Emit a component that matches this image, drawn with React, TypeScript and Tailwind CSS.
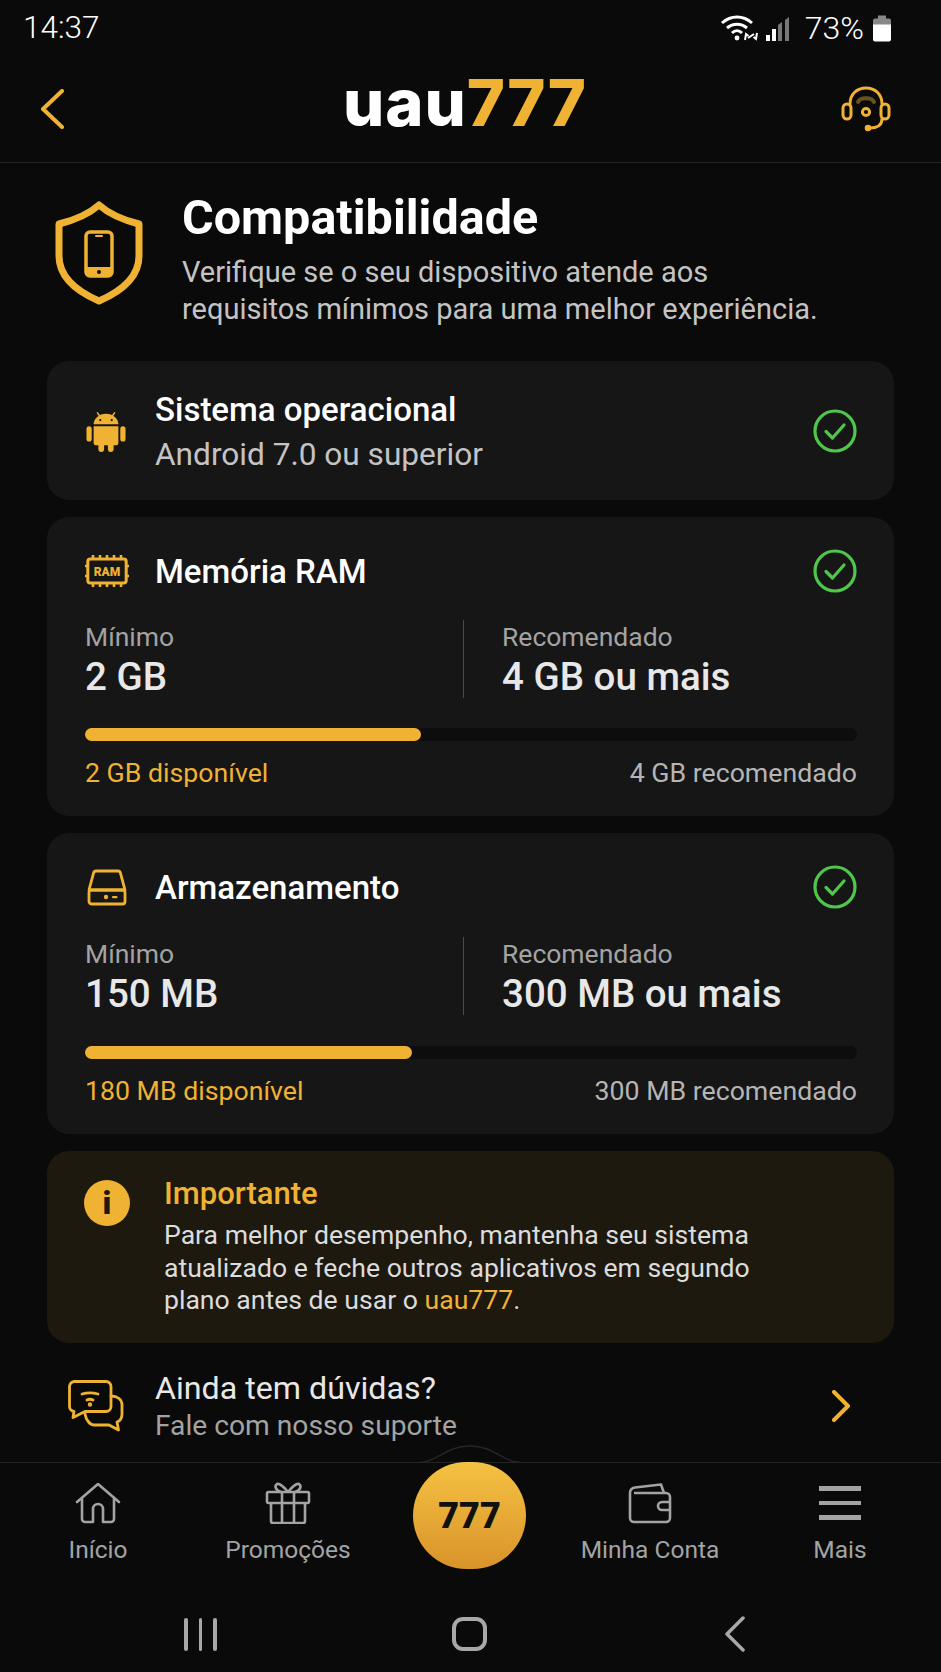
import React from "react";

const GOLD = "#f0b232";

function CheckBadge() {
  return (
    <svg width="44" height="44" viewBox="0 0 44 44" fill="none" className="shrink-0">
      <circle cx="22" cy="22" r="20" stroke="#4fc74a" strokeWidth="3.2" />
      <path d="M13 22.5l6.5 6.5L31 16" stroke="#4fc74a" strokeWidth="3.2" strokeLinecap="round" strokeLinejoin="round" />
    </svg>
  );
}

function ShieldIcon() {
  return (
    <svg width="88" height="104" viewBox="0 0 88 104" fill="none">
      <path d="M44 4C35 12 24 18 4 23v32c0 20 17 35 40 45 23-10 40-25 40-45V23C64 18 53 12 44 4z" stroke={GOLD} strokeWidth="7" strokeLinejoin="round" />
      <rect x="31" y="31" width="26" height="44" rx="4" stroke={GOLD} strokeWidth="3.5" />
      <path d="M31 66h26v6a4 4 0 0 1-4 4H35a4 4 0 0 1-4-4z" fill={GOLD} />
      <rect x="40" y="34" width="8" height="2" rx="1" fill={GOLD} />
      <circle cx="44" cy="71" r="2" fill="#0a0a0a" />
    </svg>
  );
}

function AndroidIcon() {
  return (
    <svg width="40" height="42" viewBox="0 0 42 44" fill={GOLD} className="ml-[1px]">
      <path d="M12 3l3 4M30 3l-3 4" stroke={GOLD} strokeWidth="1.6" strokeLinecap="round" />
      <path d="M8 15a13 11 0 0 1 26 0z" />
      <circle cx="15" cy="10.5" r="1.2" fill="#161616" />
      <circle cx="27" cy="10.5" r="1.2" fill="#161616" />
      <path d="M8 17h26v17a3 3 0 0 1-3 3H11a3 3 0 0 1-3-3z" />
      <rect x="0.5" y="17" width="5.5" height="16" rx="2.7" />
      <rect x="36" y="17" width="5.5" height="16" rx="2.7" />
      <rect x="13" y="33" width="6" height="11" rx="3" />
      <rect x="23" y="33" width="6" height="11" rx="3" />
    </svg>
  );
}

function RamIcon() {
  return (
    <svg width="44" height="32" viewBox="0 0 44 32" fill="none">
      <rect x="2.8" y="4" width="38.4" height="24" rx="2.5" stroke={GOLD} strokeWidth="3" />
      <path d="M8 0v3M15 0v3M22 0v3M29 0v3M36 0v3M8 29v3M15 29v3M22 29v3M29 29v3M36 29v3M0 11h2M0 21h2M42 11h2M42 21h2" stroke={GOLD} strokeWidth="2.6" />
      <text x="22" y="20.5" textAnchor="middle" fontSize="12" fontWeight="900" fill={GOLD} fontFamily="Roboto, sans-serif">RAM</text>
    </svg>
  );
}

function DriveIcon() {
  return (
    <svg width="40" height="37" viewBox="0 0 40 37" fill="none" className="ml-[2px]">
      <path d="M9 2h22a2.5 2.5 0 0 1 2.4 1.9L38 21H2L6.6 3.9A2.5 2.5 0 0 1 9 2z" stroke={GOLD} strokeWidth="2.8" strokeLinejoin="round" />
      <rect x="2" y="21" width="36" height="14" rx="2.5" stroke={GOLD} strokeWidth="2.8" />
      <circle cx="19" cy="28" r="2.2" fill={GOLD} />
      <rect x="25" y="27" width="5.5" height="2.2" rx="1" fill={GOLD} />
    </svg>
  );
}

function HeadsetIcon() {
  return (
    <svg width="50" height="46" viewBox="0 0 50 46" fill="none" stroke={GOLD} strokeWidth="3" strokeLinecap="round">
      <path d="M9 18C9 8 16 2 25 2s16 6 16 16" />
      <rect x="2" y="18" width="8" height="15" rx="4" />
      <rect x="40" y="18" width="8" height="15" rx="4" />
      <circle cx="25" cy="26" r="3.6" />
      <path d="M41 33c0 6-5 9-12 9" />
      <circle cx="27" cy="42" r="1.8" fill={GOLD} />
      <path d="M17 16c2-5 14-5 16 0" stroke="#6a5220" strokeWidth="4" />
    </svg>
  );
}

function ChatIcon() {
  return (
    <svg width="56" height="52" viewBox="0 0 56 52" fill="none" stroke={GOLD} strokeWidth="2.8" strokeLinejoin="round" strokeLinecap="round">
      <path d="M7 1.5h31a5 5 0 0 1 5 5v20a5 5 0 0 1-5 5H17l-12 6 1-6.2a5 5 0 0 1-4.500-4.800v-20a5 5 0 0 1 5-5z" />
      <path d="M43 16c6 0 11 3 11 9v9c0 4-2 7-5 8l1.500 8-9.500-5H26c-4 0-8-5-9-11" />
      <path d="M14 14c5-1.500 11-1.500 16 0M19 20c2-1 4-1 6 0" />
      <circle cx="22" cy="24.500" r="0.8" fill={GOLD} />
    </svg>
  );
}

function HomeIcon() {
  return (
    <svg width="46" height="42" viewBox="0 0 46 42" fill="none" stroke="#a3a3a3" strokeWidth="2.6" strokeLinejoin="round" strokeLinecap="round">
      <path d="M2 20L23 2l21 18" />
      <path d="M7 17v20a3 3 0 0 0 3 3h8V27a5 5 0 0 1 10 0v13h8a3 3 0 0 0 3-3V17" />
    </svg>
  );
}

function GiftIcon() {
  return (
    <svg width="46" height="42" viewBox="0 0 46 42" fill="none" stroke="#a3a3a3" strokeWidth="2.6" strokeLinejoin="round">
      <rect x="2" y="10" width="42" height="11" rx="1.5" />
      <path d="M6 21v18a2 2 0 0 0 2 2h30a2 2 0 0 0 2-2V21M17 10v31M29 10v31" />
      <path d="M23 10C19 5 15 1 12 2c-3 2-1 7 4 8M23 10c4-5 8-9 11-8 3 2 1 7-4 8" />
    </svg>
  );
}

function WalletIcon() {
  return (
    <svg width="44" height="41" viewBox="0 0 44 41" fill="none" stroke="#a3a3a3" strokeWidth="2.6" strokeLinejoin="round">
      <path d="M2 10c0-3 2-5 5-5.500L33 1.500 36 10" />
      <path d="M2 10v25a4 4 0 0 0 4 4h32a4 4 0 0 0 4-4V14a4 4 0 0 0-4-4H6" />
      <path d="M42 19h-8a4 4 0 0 0 0 8h8" />
    </svg>
  );
}

function MenuIcon() {
  return (
    <div className="flex h-[42px] w-[42px] flex-col justify-center gap-[10px]">
      <div className="h-[4.500px] bg-[#a3a3a3]" />
      <div className="h-[4.500px] bg-[#a3a3a3]" />
      <div className="h-[4.500px] bg-[#a3a3a3]" />
    </div>
  );
}

function StatusIcons() {
  return (
    <svg width="73" height="27" viewBox="0 0 73 27" fill="none">
      <path d="M1 8c9-8 21-8 30 0M6 13c6-5 14-5 20 0M11 18c3-3 7-3 10 0" stroke="#fff" strokeWidth="3" />
      <circle cx="16" cy="23" r="2.400" fill="#fff" />
      <path d="M24 25l1-6 2.500 2M36 18l-1 6-2.500-2" stroke="#fff" strokeWidth="2" />
      <path d="M27 23l6-4" stroke="#fff" strokeWidth="2" />
      <rect x="45" y="20" width="4" height="6" fill="#fff" />
      <rect x="51" y="14" width="4" height="12" fill="#fff" />
      <path d="M57 10l4-3v19h-4z" fill="#777" />
      <path d="M64 5l4-3v24h-4z" fill="#777" />
    </svg>
  );
}

type SpecProps = {
  icon: React.ReactNode;
  title: string;
  min: string;
  rec: string;
  fill: string;
  available: string;
  recommended: string;
  tall?: boolean;
};

function SpecCard({ icon, title, min, rec, fill, available, recommended, tall }: SpecProps) {
  return (
    <section className="flex flex-col rounded-[22px] bg-[#161616] pb-[28px] pl-[38px] pr-[37px] pt-[32px]">
      <div className="flex h-[44px] items-center">
        <div className="flex w-[70px] items-center">{icon}</div>
        <h2 className="flex-1 text-[33px] font-medium leading-none text-white">{title}</h2>
        <CheckBadge />
      </div>
      <div className={`${tall ? "mt-[28px]" : "mt-[27px]"} flex h-[78px]`}>
        <div className="flex w-[379px] flex-col border-r border-[#4a4a4a] pt-[2px]">
          <span className="text-[26.500px] leading-[30px] text-[#a3a3a3]">Mínimo</span>
          <span className="mt-[5px] text-[38.500px] font-medium leading-[40px] text-[#e8e8e8]">{min}</span>
        </div>
        <div className="flex flex-col pl-[38px] pt-[2px]">
          <span className="text-[26.500px] leading-[30px] text-[#a3a3a3]">Recomendado</span>
          <span className="mt-[5px] text-[38.500px] font-medium leading-[40px] text-[#e8e8e8]">{rec}</span>
        </div>
      </div>
      <div className={`${tall ? "mt-[31px]" : "mt-[30px]"} h-[13px] rounded-full bg-[#0d0d0d]`}>
        <div className="h-full rounded-full bg-[#f0b232]" style={{ width: fill }} />
      </div>
      <div className="mt-[17px] flex items-center justify-between text-[26.700px] leading-[30px]">
        <span className="text-[#f0b232]">{available}</span>
        <span className="text-[#b5b5b5]">{recommended}</span>
      </div>
    </section>
  );
}

function NavItem({ icon, label }: { icon: React.ReactNode; label: string }) {
  return (
    <div className="flex flex-col items-center">
      <div className="flex h-[46px] items-end">{icon}</div>
      <span className="mt-[11px] whitespace-nowrap text-[24.500px] leading-[30px] text-[#a3a3a3]">{label}</span>
    </div>
  );
}

export default function App() {
  return (
    <div className="flex h-[1672px] w-[941px] flex-col overflow-hidden bg-[#0a0a0a] font-[Roboto,sans-serif]">
      <div className="flex h-[56px] items-center justify-between pl-[23px] pr-[49px] text-white">
        <span className="text-[31.500px] font-light leading-none">14:37</span>
        <div className="flex items-center">
          <StatusIcons />
          <span className="ml-[11px] text-[32px] font-light leading-none">73%</span>
          <svg width="20" height="27" viewBox="0 0 20 26" className="ml-[8px]">
            <path d="M6 0h8v3h3a2 2 0 0 1 2 2v6H1V5a2 2 0 0 1 2-2h3z" fill="#888" />
            <path d="M1 9h18v15a2 2 0 0 1-2 2H3a2 2 0 0 1-2-2z" fill="#fff" />
          </svg>
        </div>
      </div>

      <header className="flex h-[107px] items-center border-b border-[#252525] pl-[39px] pr-[50px]">
        <svg width="26" height="40" viewBox="0 0 26 40" fill="none">
          <path d="M23 2L4 20l19 18" stroke={GOLD} strokeWidth="4" strokeLinecap="round" strokeLinejoin="round" />
        </svg>
        <div className="-mt-[13px] ml-[278px] font-[Inter,sans-serif] text-[65px] font-extrabold leading-[74px] tracking-[1px] text-white">
          uau<span className="text-[#f0b232]">777</span>
        </div>
        <div className="ml-auto">
          <HeadsetIcon />
        </div>
      </header>

      <main className="flex flex-1 flex-col px-[47px] pt-[36px]">
        <div className="flex h-[162px]">
          <div className="w-[135px] pl-[8px] pt-[2px]">
            <ShieldIcon />
          </div>
          <div className="flex flex-col">
            <h1 className="-mt-[3px] text-[48.500px] font-bold leading-[44px] text-white">Compatibilidade</h1>
            <p className="mt-[14px] whitespace-nowrap text-[29px] leading-[37px] text-[#c4c4c4]">
              Verifique se o seu dispositivo atende aos
              <br />
              requisitos mínimos para uma melhor experiência.
            </p>
          </div>
        </div>

        <div className="flex flex-col gap-[17px]">
          <section className="flex h-[139px] items-center rounded-[22px] bg-[#161616] pl-[38px] pr-[37px]">
            <div className="flex w-[70px] items-center">
              <AndroidIcon />
            </div>
            <div className="flex flex-1 flex-col pt-[4px]">
              <span className="text-[33px] font-medium leading-[36px] text-white">Sistema operacional</span>
              <span className="mt-[9px] text-[31.600px] leading-[36px] text-[#c4c4c4]">Android 7.0 ou superior</span>
            </div>
            <CheckBadge />
          </section>

          <SpecCard icon={<RamIcon />} title="Memória RAM" min="2 GB" rec="4 GB ou mais" fill="43.5%" available="2 GB disponível" recommended="4 GB recomendado" />
          <SpecCard tall icon={<DriveIcon />} title="Armazenamento" min="150 MB" rec="300 MB ou mais" fill="42.3%" available="180 MB disponível" recommended="300 MB recomendado" />

          <section className="flex h-[192px] rounded-[22px] bg-[#1d190f] pl-[37px] pt-[27px]">
            <div className="mt-[2px] flex h-[46px] w-[46px] items-center justify-center rounded-full bg-[#f0b232] text-[32px] font-black text-[#1d190f]">
              i
            </div>
            <div className="ml-[34px] flex flex-col">
              <span className="text-[31px] font-medium leading-[32px] text-[#f0b232]">Importante</span>
              <p className="mt-[9px] text-[26.600px] leading-[32.700px] text-[#dcdcdc]">
                Para melhor desempenho, mantenha seu sistema
                <br />
                atualizado e feche outros aplicativos em segundo
                <br />
                plano antes de usar o <span className="text-[#f0b232]">uau777</span>.
              </p>
            </div>
          </section>
        </div>

        <div className="mt-[26px] flex items-center pl-[21px] pr-[43px]">
          <ChatIcon />
          <div className="ml-[31px] flex flex-1 flex-col">
            <span className="text-[32.200px] leading-[38px] text-[#e8e8e8]">Ainda tem dúvidas?</span>
            <span className="mt-[3px] text-[28.200px] leading-[32px] text-[#a3a3a3]">Fale com nosso suporte</span>
          </div>
          <svg width="20" height="32" viewBox="0 0 20 32" fill="none">
            <path d="M3 2l14 14L3 30" stroke={GOLD} strokeWidth="4" strokeLinecap="round" strokeLinejoin="round" />
          </svg>
        </div>
      </main>

      <nav className="relative grid h-[138px] grid-cols-[196px_184px_178px_184px_196px] border-t border-[#252525] pt-[15px]">
        <NavItem icon={<HomeIcon />} label="Início" />
        <NavItem icon={<GiftIcon />} label="Promoções" />
        <div>
          <svg width="100" height="18" viewBox="0 0 100 18" fill="none" className="absolute left-[420px] top-[-18px]">
            <path d="M0 17.500C18 17 25 1 50 1s32 16 50 16.500" stroke="#252525" strokeWidth="1.500" />
          </svg>
          <div className="absolute left-[413px] top-[-1px] flex h-[107px] w-[113px] items-center justify-center rounded-full bg-gradient-to-b from-[#f5c242] to-[#d9932a] text-[36px] font-black text-[#111]">
            777
          </div>
        </div>
        <NavItem icon={<WalletIcon />} label="Minha Conta" />
        <NavItem icon={<MenuIcon />} label="Mais" />
      </nav>

      <div className="flex h-[72px] items-center justify-between pb-[4px] pl-[184px] pr-[194px]">
        <div className="flex gap-[11px]">
          <div className="h-[33px] w-[3.500px] rounded-full bg-[#a8a8a8]" />
          <div className="h-[33px] w-[3.500px] rounded-full bg-[#a8a8a8]" />
          <div className="h-[33px] w-[3.500px] rounded-full bg-[#a8a8a8]" />
        </div>
        <div className="h-[34px] w-[35px] rounded-[11px] border-[4px] border-[#a8a8a8]" />
        <svg width="24" height="36" viewBox="0 0 24 36" fill="none">
          <path d="M20 2L4 18l16 16" stroke="#a8a8a8" strokeWidth="3.500" strokeLinecap="round" strokeLinejoin="round" />
        </svg>
      </div>
    </div>
  );
}
